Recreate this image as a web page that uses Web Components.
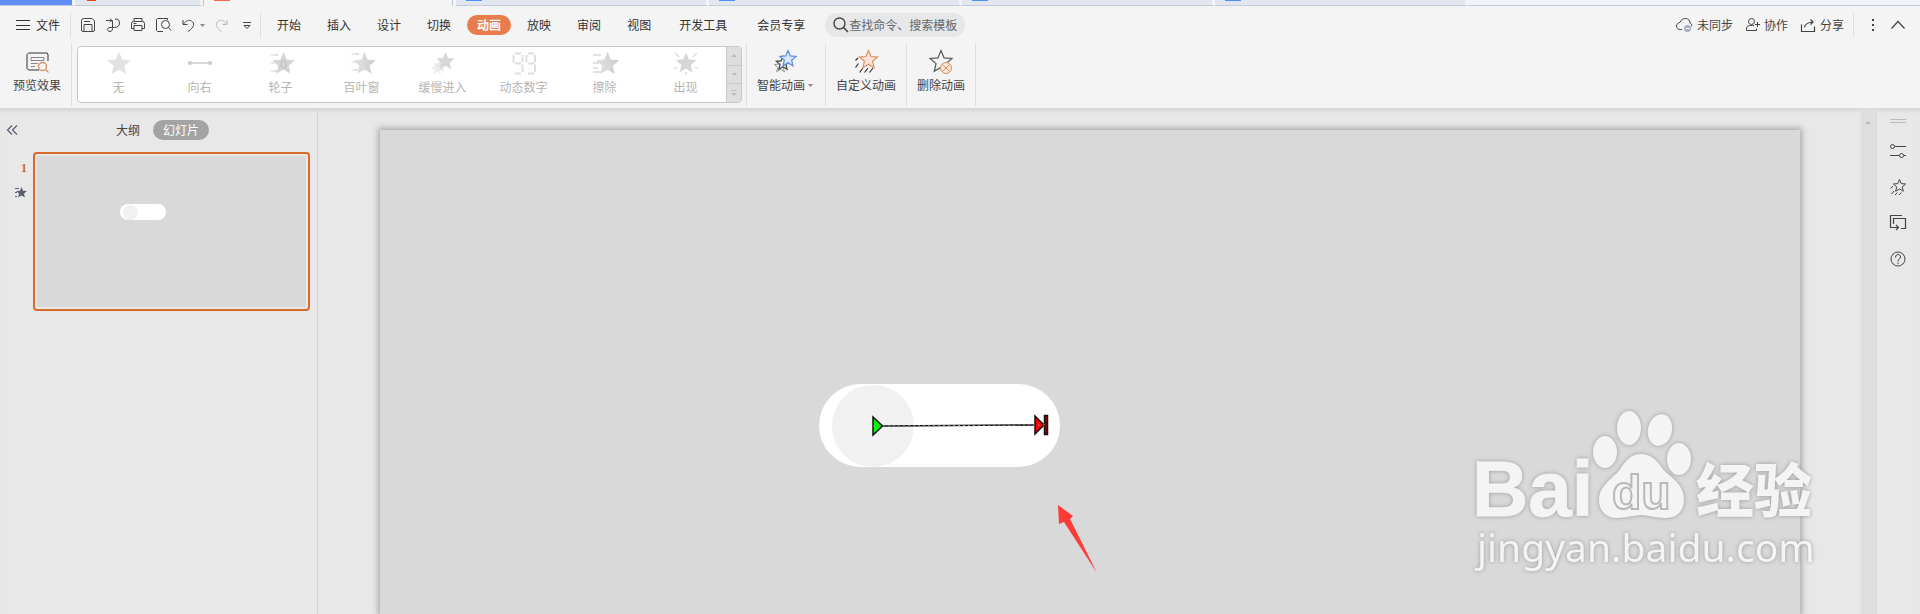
<!DOCTYPE html>
<html lang="zh-CN">
<head>
    <meta charset="UTF-8">
    <meta name="viewport" content="width=device-width, initial-scale=1.0">
    <title>WPS 演示</title>
    <style>
        body {
            margin: 0;
            height: 100vh;
            overflow: hidden;
            display: flex;
            flex-direction: column;
            background: #f4f4f4;
            color: #444;
            font: 12px/16px "Noto Sans CJK SC", sans-serif;
        }
        main {
            flex: 1;
            min-height: 0;
            display: flex;
            background: #e8e8e8;
            border-top: 1px solid #dadada;
            box-shadow: inset 0 4px 4px -3px #ccc;
        }
    </style>
</head>
<body>

    <doc-tabs></doc-tabs>
    <menu-bar></menu-bar>
    <tool-ribbon></tool-ribbon>
    <main>
        <slide-panel></slide-panel>
        <slide-stage></slide-stage>
        <side-bar></side-bar>
    </main>


    <script>
        // five-pointed star around cx, cy
        function star(cx, cy, r, attrs = '') {
            const points = [];
            for (let i = 0; i < 10; i++) {
                const a = Math.PI * i / 5;
                const d = i % 2 ? r * 0.45 : r;
                points.push((cx + d * Math.sin(a)).toFixed(2) + ',' + (cy - d * Math.cos(a)).toFixed(2));
            }
            return `<polygon points="${points.join(' ')}" ${attrs}/>`;
        }

        const fade = `<defs><linearGradient id="g"><stop offset="0" stop-color="#e2e2e2"/><stop offset="1" stop-color="#cdcdcd"/></linearGradient>
            <linearGradient id="h" gradientUnits="userSpaceOnUse" x1="0" x2="9" y1="0" y2="0"><stop offset="0" stop-color="#f8f8f8"/><stop offset="1" stop-color="#d8d8d8"/></linearGradient></defs>`;

        // name: [width, height, shapes]
        const icons = {
            menu: [14, 12, '<path d="M0 1.5h14M0 6.5h14M0 10.5h14"/>'],
            save: [14, 14, '<path d="M2.5.5h8.5l2.5 2.5v9a1.500 1.500 0 0 1-1.500 1.500h-10a1.500 1.500 0 0 1-1.500-1.500v-9.500a2 2 0 0 1 2-2zM3 13V6.500h8V13M3 3.500h6"/>'],
            convert: [14, 14, '<path d="M0 2.500h6M4 .5l2 2-2 2M6.500 2.500v8c0 2-1 3-2.500 3s-2.500-1-2.500-2 1-2 2.500-2h4.500c3 0 5-1.500 5-4.500s-1.500-4-4.500-4"/>'],
            print: [14, 14, '<path d="M3 3.500V.5h8v3M3 10.500H.5v-5a2 2 0 0 1 2-2h9a2 2 0 0 1 2 2v5H11M3 7.500h8v5H3zM2.500 5.500h3"/>'],
            preview: [15, 14, '<path d="M11.500 2V.5H1.500l-1 1v11l1 1H7"/><circle cx="9.500" cy="6.500" r="4"/><path d="M12.500 9.500l2.500 3"/>'],
            undo: [13, 13, '<path d="M1 1v4.500h4.500M1.500 5C4 1.500 7 .5 9.500 2c3 2 3.500 6-3.500 10.500"/>'],
            redo: [13, 13, '<path d="M12 1v4.500H7.500M11.500 5C9 1.500 6 .5 3.500 2c-3 2-3.500 6 3 10.500"/>'],
            caret: [5, 3, '<path d="M0 0h5L2.500 3z" fill="currentColor" stroke="none"/>'],
            up: [6, 3, '<path d="M0 3h6L3 0z" fill="currentColor" stroke="none"/>'],
            more: [8, 7, '<path d="M0 .5h8M1 3.500h6L4 6.500z"/>'],
            expand: [6, 6, '<path d="M0 .5h6"/><path d="M0 3h6L3 6z" fill="currentColor" stroke="none"/>'],
            search: [16, 16, '<circle cx="6.500" cy="6.500" r="5.500" stroke-width="1.400"/><path d="M10.500 10.500l4.500 4.500" stroke-width="1.600"/>'],
            cloud: [17, 15, '<path d="M6 11.500H4.500C2 11.500.5 10 .5 8s1.500-3.500 3.500-3.500C5 1.500 7 .5 9.500.5c3 0 4.500 2 4.500 4.500 1.500.5 2 2 1.500 3.500"/><circle cx="11.500" cy="10.500" r="3.500" fill="#a9aec0" stroke="none"/><path d="M9.500 10.500h4" stroke="#fff"/>'],
            user: [14, 14, '<circle cx="5.500" cy="3.500" r="3"/><path d="M8 7.500c-2-.3-4.500-.2-6 .5-1 .5-1.500 1.500-1.500 3v1.500h10v-2M9 6.500h5M11.500 4v5"/>'],
            share: [15, 13, '<path d="M.5 5.500v7h13v-5M3.500 8.500c.5-3.500 3-5 8-5.500M9.500.5L12 3 9.500 5.500" stroke-width="1.200"/>'],
            dots: [2, 12, '<path d="M0 1h2M0 6h2M0 11h2" stroke-width="2"/>'],
            chevron: [14, 8, '<path d="M.5 7.500l6.500-7 6.500 7" stroke-width="1.200"/>'],
            fold: [11, 10, '<path d="M5 .5L.5 5 5 9.500M10 .5L5.500 5 10 9.500" stroke-width="1.200"/>'],
            show: [24, 24, '<path d="M14 20H3.500L2 18.500V4.500L3.500 3H22l1 1v7" stroke="#333"/><path d="M6 7.500h13v3H6zM6 13.500h7M6 16.500h4" stroke="#888"/><g stroke="#d98f63" stroke-width="1.300"><circle cx="17.500" cy="16.500" r="4"/><path d="M20.500 19.500l3 3"/></g>'],
            smart: [24, 24, star(7.500, 16.500, 6.500, 'stroke="#999"') + star(10, 13.500, 7, 'fill="#f4f4f4" stroke="#444" stroke-width="1.200"') + star(15, 9, 8.500, 'fill="#dde8f8" stroke="#5a8ce0" stroke-width="1.200"')],
            custom: [24, 24, '<path d="M4 8L1.500 10.500M4.500 13.500l-3 4M9 18l-3.500 4.500M14 18l-3.500 4.500M19 18l-3.500 4.500" stroke="#333" stroke-width="1.200"/>' + star(14.500, 10, 9.500, 'fill="#f7e5da" stroke="#dc915f" stroke-width="1.200"')],
            remove: [24, 24, star(12, 12, 11.500, 'stroke="#555" stroke-width="1.200"') + '<circle cx="17" cy="18" r="5.500" fill="#f7e5da" stroke="#dc915f"/><path d="M13.500 14.500l7 7M20.500 14.500l-7 7" stroke="#dc915f"/>'],
            none: [24, 24, star(12, 13, 12.500, 'fill="#e2e2e2" stroke="none"')],
            right: [24, 24, '<path d="M2 12h20" stroke="#d8d8d8" stroke-width="2"/><circle cx="2" cy="12" r="2" fill="#c8c8c8" stroke="none"/><circle cx="22" cy="12" r="2" fill="#c8c8c8" stroke="none"/>'],
            wheel: [24, 24, fade + '<path d="M0 4h9v1H0zM1 12h5v1H1zM1 20h8v1H1z" fill="url(#h)"  stroke="none"/>' + '<path d="M0 3h9v1H0zM1 11h4v1H1zM1 19h7v1H1z" fill="url(#h)" stroke="none"/>' + star(14.500, 13, 12, 'fill="#d4d4d4" stroke="none"') + '<ellipse cx="14.500" cy="13.500" rx="2.500" ry="4" stroke="#bbb"/>'],
            blinds: [24, 24, fade + '<path d="M1 2h8v2H1zM1 10h5v2H1zM1 18h7v2H1z" fill="url(#h)" stroke="none"/>' + star(14.500, 13, 12, 'fill="url(#g)" stroke="none"')],
            crawl: [24, 24, star(6, 18, 7, 'fill="#f0f0f0" stroke="none"') + star(9, 15, 7, 'fill="#e8e8e8" stroke="none"') + star(14.500, 10.500, 9.500, 'fill="#d6d6d6" stroke="none"')],
            digits: [24, 24, '<g stroke="#dedede" stroke-width="2"><path d="M3 2.500h6M3 12.500h6M3 22.500h6M16 2.500h6M16 12.500h6M16 22.500h6" /><path d="M1.500 4v7.500M10.500 4v7.500M10.500 13.500V21M14.500 4v7.500M23 4v7.500M23 13.500V21"/></g>'],
            wipe: [24, 24, fade + '<path d="M0 4h8M0 12h6M0 17h5M0 21h9" stroke="#e2e2e2" stroke-width="2"/>' + star(14.500, 13, 12.500, 'fill="url(#g)" stroke="none"')],
            appear: [24, 24, star(12, 12.500, 11, 'fill="#d6d6d6" stroke="none"') + '<path d="M1 2l4 4M23 2l-4 4M0 18l3-2M24 18l-3-2M12 21v3" stroke="#ddd" stroke-width="1.500"/>'],
            effect: [13, 11, '<path d="M1 1.500h4M1 5.500h2M1 9.500h2" stroke-width="1.200"/>' + star(7.500, 5.800, 5.800, 'fill="currentColor" stroke="none"')],
            grip: [16, 4, '<path d="M0 .5h16M0 3.500h16"/>'],
            sliders: [16, 16, '<circle cx="2.500" cy="3.500" r="2"/><path d="M5 3.500h11M0 12.500h9M14 12.500h2"/><circle cx="11.500" cy="12.500" r="2"/>'],
            motion: [16, 16, star(9.500, 7, 6.500) + '<path d="M3 7L.5 9.500M4 12l-2.500 3M7.500 13.500L5 16M11.500 13.500L9 16"/>'],
            layers: [16, 16, '<path d="M12 .5H.5v12H8M6 10l2.500 2.500L6 15M3.500 9V3.500h12v10H11" stroke-width="1.200"/>'],
            help: [16, 16, '<circle cx="8" cy="8" r="7"/><path d="M5.500 6.500C5.500 4 7 3.500 8 3.500s2.500.7 2.500 2.500S8 8 8 10.500M8 11.500v1.500"/>']
        };

        class WpsIcon extends HTMLElement {
            constructor() {
                super();
                this.attachShadow({ mode: 'open' });
            }

            connectedCallback() {
                const [w, h, shapes] = icons[this.getAttribute('name')];
                this.shadowRoot.innerHTML = /* html */ `
                    <style>
                        :host { display: block; flex: none; }
                        svg { display: block; overflow: visible; }
                    </style>
                    <svg width="${w}" height="${h}" viewBox="0 0 ${w} ${h}" fill="none" stroke="currentColor" aria-hidden="true">${shapes}</svg>
                `;
            }
        }
        customElements.define('wps-icon', WpsIcon);


        // the lower edge of the document tabs
        class DocTabs extends HTMLElement {
            constructor() {
                super();
                this.attachShadow({ mode: 'open' });
                this.shadowRoot.innerHTML = /* html */ `
                    <style>
                        :host { display: flex; height: 6px; background: #f2f4f9; }
                        div { box-sizing: border-box; border-bottom: 1px solid #c6cbdc; padding-left: 10px; flex: none; width: 253px; background: #e1e6ef; border-right: 3px solid #f2f4f9; }
                        i { display: block; width: 16px; height: 1px; background: #4a90f5; }
                        .home { width: 75px; background: #5f8df9; }
                        .store { width: 128px; padding-left: 12px; }
                        .store i { width: 9px; background: #f4420c; }
                        .active { width: 250px; margin-right: 3px; background: #f4f4f4; border: solid #c0c5d8; border-width: 0 1px; }
                        .active i { background: #f56b45; height: 1px; }
                        .rest { flex: 1; background: none; border-right: 0; }
                    </style>
                    <div class="home"></div>
                    <div class="store"><i></i></div>
                    <div class="active"><i></i></div>
                    <div><i></i></div>
                    <div><i></i></div>
                    <div><i></i></div>
                    <div><i></i></div>
                    <div class="rest"></div>
                `;
            }
        }
        customElements.define('doc-tabs', DocTabs);


        class MenuBar extends HTMLElement {
            constructor() {
                super();
                this.attachShadow({ mode: 'open' });
                this.shadowRoot.innerHTML = /* html */ `
                    <style>
                        :host { display: flex; align-items: center; height: 38px; padding: 0 15px 0 16px; color: #444; }
                        button { display: flex; align-items: center; border: 0; padding: 0; background: none; font: inherit; color: inherit; white-space: nowrap; }
                        .line { width: 1px; height: 24px; background: #dcdcdc; }
                        .file { gap: 6px; padding-right: 10px; color: #333; }
                        .quick { display: flex; align-items: center; gap: 11px; padding: 0 9px 0 10px; }
                        .quick .tight { margin-left: -6px; color: #888; }
                        .quick .off { margin-left: -1px; color: #b8b8b8; }
                        .quick .last { margin-left: 4px; }
                        nav { display: flex; gap: 6px; padding-left: 6px; color: #333; }
                        nav button { height: 20px; padding: 0 10px; border-radius: 10px; }
                        nav .wide { padding: 0 12px; }
                        nav .on { background: #e87c4c; color: #fff; font-weight: bold; }
                        label { display: flex; align-items: center; width: 132px; height: 24px; margin-left: 8px; padding-left: 8px; border-radius: 12px; background: #e5e7e9; }
                        input { flex: 1; min-width: 0; border: 0; padding: 0; background: none; font: inherit; outline: none; }
                        input::placeholder { color: #666; opacity: 1; }
                        .account { display: flex; align-items: center; gap: 13px; margin-left: auto; }
                        .account button { gap: 4px; }
                        .account .line { margin: 0 5px 0 -4px; }
                        .account .end { margin-left: 4px; }
                    </style>
                    <button class="file"><wps-icon name="menu"></wps-icon>文件</button>
                    <span class="line"></span>
                    <div class="quick">
                        <button aria-label="保存"><wps-icon name="save"></wps-icon></button>
                        <button aria-label="输出"><wps-icon name="convert"></wps-icon></button>
                        <button aria-label="打印"><wps-icon name="print"></wps-icon></button>
                        <button aria-label="打印预览"><wps-icon name="preview"></wps-icon></button>
                        <button aria-label="撤销"><wps-icon name="undo"></wps-icon></button>
                        <button aria-label="撤销列表" class="tight"><wps-icon name="caret"></wps-icon></button>
                        <button aria-label="恢复" class="off"><wps-icon name="redo"></wps-icon></button>
                        <button aria-label="更多" class="last"><wps-icon name="more"></wps-icon></button>
                    </div>
                    <span class="line"></span>
                    <nav>
                        <button>开始</button>
                        <button>插入</button>
                        <button>设计</button>
                        <button>切换</button>
                        <button class="on">动画</button>
                        <button>放映</button>
                        <button>审阅</button>
                        <button>视图</button>
                        <button class="wide">开发工具</button>
                        <button class="wide">会员专享</button>
                    </nav>
                    <label><wps-icon name="search"></wps-icon><input type="text" aria-label="查找" placeholder="查找命令、搜索模板"></label>
                    <div class="account">
                        <button><wps-icon name="cloud"></wps-icon>未同步</button>
                        <button><wps-icon name="user"></wps-icon>协作</button>
                        <button><wps-icon name="share"></wps-icon>分享</button>
                        <span class="line"></span>
                        <button aria-label="更多"><wps-icon name="dots"></wps-icon></button>
                        <button aria-label="收起" class="end"><wps-icon name="chevron"></wps-icon></button>
                    </div>
                `;
            }
        }
        customElements.define('menu-bar', MenuBar);


        class RibbonButton extends HTMLElement {
            constructor() {
                super();
                this.attachShadow({ mode: 'open' });
                this.shadowRoot.innerHTML = /* html */ `
                    <style>
                        :host { display: block; border-right: 1px solid #dedede; }
                        button { display: flex; flex-direction: column; align-items: center; gap: 3px; height: 100%; padding: 6px 10px 0; border: 0; background: none; font: inherit; color: #444; white-space: nowrap; }
                        span { display: flex; align-items: center; gap: 3px; }
                        :host([menu]) button { padding-right: 12px; }
                        :host([plain]) { border: 0; }
                        :host([plain]) button { width: 100%; padding: 4px 0 0; gap: 4px; color: #b5b5b5; }
                    </style>
                    <button><wps-icon name="${this.getAttribute('icon')}"></wps-icon><span><slot></slot></span></button>
                `;
            }
        }

        class ToolRibbon extends HTMLElement {
            constructor() {
                super();
                this.attachShadow({ mode: 'open' });
                this.shadowRoot.innerHTML = /* html */ `
                    <style>
                        :host { display: flex; height: 62px; padding-bottom: 2px; }
                        .first { padding-left: 3px; }
                        .gallery { display: flex; box-sizing: border-box; height: 57px; margin: 2px 4px 0 5px; border: 1px solid #c8c8c8; border-radius: 4px; background: #fff; overflow: hidden; }
                        .gallery ribbon-button { width: 81px; }
                        .pager { display: grid; grid-template-rows: 1fr 1fr 1fr; gap: 1px; width: 14px; border-left: 1px solid #c8c8c8; background: #c8c8c8; }
                        .pager button { display: grid; place-items: center; border: 0; padding: 0; background: #dedede; color: #bbb; }
                        wps-icon[name="caret"] { color: #888; }
                        .pager wps-icon[name="caret"] { color: #bbb; }
                        .tools { display: flex; border-left: 1px solid #dedede; }
                    </style>
                    <ribbon-button class="first" icon="show">预览效果</ribbon-button>
                    <div class="gallery">
                        <ribbon-button plain icon="none">无</ribbon-button>
                        <ribbon-button plain icon="right">向右</ribbon-button>
                        <ribbon-button plain icon="wheel">轮子</ribbon-button>
                        <ribbon-button plain icon="blinds">百叶窗</ribbon-button>
                        <ribbon-button plain icon="crawl">缓慢进入</ribbon-button>
                        <ribbon-button plain icon="digits">动态数字</ribbon-button>
                        <ribbon-button plain icon="wipe">擦除</ribbon-button>
                        <ribbon-button plain icon="appear">出现</ribbon-button>
                        <div class="pager">
                            <button aria-label="上一行"><wps-icon name="up"></wps-icon></button>
                            <button aria-label="下一行"><wps-icon name="caret"></wps-icon></button>
                            <button aria-label="展开"><wps-icon name="expand"></wps-icon></button>
                        </div>
                    </div>
                    <div class="tools">
                        <ribbon-button menu icon="smart">智能动画<wps-icon name="caret"></wps-icon></ribbon-button>
                        <ribbon-button icon="custom">自定义动画</ribbon-button>
                        <ribbon-button icon="remove">删除动画</ribbon-button>
                    </div>
                `;
            }
        }
        customElements.define('ribbon-button', RibbonButton);
        customElements.define('tool-ribbon', ToolRibbon);


        // white pill with its knob, sized by --w, --h and --knob
        class SwitchShape extends HTMLElement {
            constructor() {
                super();
                this.attachShadow({ mode: 'open' });
                this.shadowRoot.innerHTML = /* html */ `
                    <style>
                        :host { display: flex; align-items: center; box-sizing: border-box; width: var(--w); height: var(--h); padding-left: var(--inset); border-radius: var(--h); background: #fff; }
                        i { width: var(--knob); height: var(--knob); border-radius: 50%; background: #f1f1f1; }
                    </style>
                    <i></i>
                `;
            }
        }
        customElements.define('switch-shape', SwitchShape);


        class SlidePanel extends HTMLElement {
            constructor() {
                super();
                this.attachShadow({ mode: 'open' });
                this.shadowRoot.innerHTML = /* html */ `
                    <style>
                        :host { display: block; box-sizing: border-box; flex: none; width: 318px; padding: 11px 7px 0; border-right: 1px solid #d4d4d4; }
                        header { display: flex; align-items: center; }
                        button { border: 0; padding: 0; background: none; font: inherit; color: #444; }
                        .fold { color: #555a78; margin-right: 98px; }
                        .on { height: 20px; margin-left: 13px; padding: 0 10px; border-radius: 10px; background: #a3a3a3; color: #fff; }
                        .row { display: flex; margin-top: 12px; }
                        .mark { display: flex; flex-direction: column; align-items: flex-end; gap: 11px; width: 20px; margin-right: 6px; padding-top: 8px; color: #5a6070; }
                        b { font-family: "Liberation Serif", serif; color: #d9641c; }
                        .thumb { position: relative; box-sizing: border-box; width: 277px; height: 159px; padding: 2px; border: 2px solid #d86b2b; border-radius: 4px; }
                        .thumb div { height: 100%; background: #d9d9d9; }
                        switch-shape { position: absolute; left: 85px; top: 50px; --w: 46px; --h: 16px; --inset: 3px; --knob: 15px; }
                    </style>
                    <header>
                        <button class="fold" aria-label="收起"><wps-icon name="fold"></wps-icon></button>
                        <button>大纲</button>
                        <button class="on">幻灯片</button>
                    </header>
                    <div class="row">
                        <div class="mark"><b>1</b><wps-icon name="effect"></wps-icon></div>
                        <div class="thumb"><div></div><switch-shape></switch-shape></div>
                    </div>
                `;
            }
        }
        customElements.define('slide-panel', SlidePanel);


        class WaterMark extends HTMLElement {
            constructor() {
                super();
                this.attachShadow({ mode: 'open' });
                this.shadowRoot.innerHTML = /* html */ `
                    <style>
                        :host { display: block; filter: drop-shadow(0 0 2px #999); }
                        svg { display: block; overflow: visible; }
                        .bai { font: bold 78px "Liberation Sans", sans-serif; stroke: #f4f4f4; stroke-width: 1px; }
                        .du { font: bold 48px "Liberation Sans", sans-serif; stroke: #b8b8b8; stroke-width: 2px; }
                        .cn { font: 900 58px "Noto Sans CJK SC", sans-serif; }
                        .url { font: 39px "Noto Sans", sans-serif; }
                    </style>
                    <svg width="350" height="180" viewBox="0 0 350 180" fill="#f4f4f4">
                        <ellipse cx="135" cy="47" rx="12" ry="16"/>
                        <ellipse cx="159" cy="23" rx="12" ry="17"/>
                        <ellipse cx="190" cy="25" rx="12" ry="16" transform="rotate(12 190 25)"/>
                        <ellipse cx="209" cy="54" rx="12" ry="16"/>
                        <path d="M171 49c9 0 15 5 21 14 6 8 22 15 22 31 0 15-10 19-19 19-10 0-16-3-24-3s-14 3-24 3c-10 0-18-6-18-18 0-15 15-22 22-32 5-8 11-14 20-14z"/>
                        <text class="bai" x="2" y="111">Bai</text>
                        <text class="du" x="142" y="104">du</text>
                        <text class="cn" x="226" y="107">经验</text>
                        <text class="url" x="7" y="157">jingyan.baidu.com</text>
                    </svg>
                `;
            }
        }
        customElements.define('water-mark', WaterMark);


        class SlideStage extends HTMLElement {
            constructor() {
                super();
                this.attachShadow({ mode: 'open' });
                this.shadowRoot.innerHTML = /* html */ `
                    <style>
                        :host { display: flex; flex: 1; min-width: 0; overflow: hidden; padding: 21px 61px 0 62px; }
                        .slide { position: relative; flex: 1; background: #d9d9d9; box-shadow: 0 0 6px 2px #a8a8a8; }
                        switch-shape { position: absolute; left: 439px; top: 254px; --w: 241px; --h: 83px; --inset: 13px; --knob: 82px; }
                        .path, .arrow { position: absolute; overflow: visible; }
                        .path { left: 492px; top: 284px; }
                        .arrow { left: 678px; top: 375px; }
                        water-mark { position: absolute; right: -20px; top: 275px; }
                    </style>
                    <div class="slide">
                        <switch-shape></switch-shape>
                        <svg class="path" width="180" height="24" stroke="#111" stroke-width="1.500">
                            <path d="M1 3v18l9.500-9z" fill="#0f0"/>
                            <path d="M163 2v18l9-9z" fill="#f00"/>
                            <path d="M172.500 1.500h3v19h-3z" fill="#900"/>
                            <path d="M11 12L163 11" stroke-width="1.500"/>
                            <path d="M1 12L176 11" stroke="#888" stroke-width="1" stroke-dasharray="2 3"/>
                        </svg>
                        <svg class="arrow" width="40" height="69" fill="#ff3b38"><path d="M0 0l15 11-3 3 27 54L6 17l-5 2z"/></svg>
                        <water-mark></water-mark>
                    </div>
                `;
            }
        }
        customElements.define('slide-stage', SlideStage);


        class SideBar extends HTMLElement {
            constructor() {
                super();
                this.attachShadow({ mode: 'open' });
                this.shadowRoot.innerHTML = /* html */ `
                    <style>
                        :host { display: flex; flex: none; }
                        .scroll { box-sizing: border-box; width: 15px; padding: 12px 4px; background: #dedede; color: #bbb; }
                        .tools { box-sizing: border-box; display: flex; flex-direction: column; align-items: center; gap: 20px; width: 44px; padding: 10px 2px 0 0; border-left: 1px solid #dadada; color: #444; }
                        .grip { color: #bbb; }
                        button { border: 0; padding: 0; background: none; color: inherit; }
                    </style>
                    <div class="scroll"><wps-icon name="up"></wps-icon></div>
                    <div class="tools">
                        <wps-icon class="grip" name="grip"></wps-icon>
                        <button aria-label="属性"><wps-icon name="sliders"></wps-icon></button>
                        <button aria-label="动画窗格"><wps-icon name="motion"></wps-icon></button>
                        <button aria-label="切换窗格"><wps-icon name="layers"></wps-icon></button>
                        <button aria-label="帮助"><wps-icon name="help"></wps-icon></button>
                    </div>
                `;
            }
        }
        customElements.define('side-bar', SideBar);
    </script>
</body>
</html>
